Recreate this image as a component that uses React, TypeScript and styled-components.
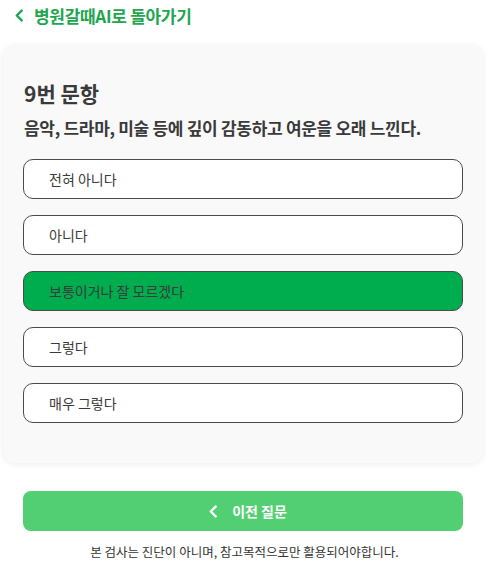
import styled, { createGlobalStyle } from "styled-components";
import { useState } from "react";

const GlobalStyle = createGlobalStyle`
  body {
    margin: 0;
    background: #ffffff;
    font-family: "Noto Sans CJK KR", "Noto Sans", sans-serif;
    color: #333333;
  }
`;

const options = ["전혀 아니다", "아니다", "보통이거나 잘 모르겠다", "그렇다", "매우 그렇다"];

function Chevron({ size = 12, color = "currentColor" }: { size?: number; color?: string }) {
  return (
    <svg width={size} height={size} viewBox="0 0 12 12" fill="none">
      <path d="M8 1.5 3.5 6 8 10.5" stroke={color} strokeWidth="2.2" strokeLinecap="round" strokeLinejoin="round" />
    </svg>
  );
}

export default function App() {
  const [selected, setSelected] = useState(2);

  return (
    <Page>
      <GlobalStyle />
      <BackLink>
        <Chevron size={13} />
        <span>병원갈때AI로 돌아가기</span>
      </BackLink>

      <Card>
        <Number>9번 문항</Number>
        <Question>음악, 드라마, 미술 등에 깊이 감동하고 여운을 오래 느낀다.</Question>
        <OptionList>
          {options.map((label, i) => (
            <Option key={label} $active={i === selected} onClick={() => setSelected(i)}>
              {label}
            </Option>
          ))}
        </OptionList>
      </Card>

      <PrevButton>
        <Chevron size={13} color="#ffffff" />
        <span>이전 질문</span>
      </PrevButton>
      <Notice>본 검사는 진단이 아니며, 참고목적으로만 활용되어야합니다.</Notice>
    </Page>
  );
}

const Page = styled.div`
  width: 499px;
  padding: 0 0 16px;
`;

const BackLink = styled.div`
  display: flex;
  align-items: center;
  gap: 8px;
  height: 30px;
  padding: 0 0 0 13px;
  color: #1ea64f;
  font-size: 17px;
  font-weight: 700;
  letter-spacing: -0.3px;
`;

const Card = styled.div`
  margin: 15px 16px 0 3px;
  padding: 30px 20px 40px;
  background: #f9f9f9;
  border-radius: 12px;
  box-shadow: 0 1px 6px rgba(0, 0, 0, 0.08);
`;

const Number = styled.div`
  margin-left: 1px;
  font-size: 21px;
  font-weight: 700;
  line-height: 36px;
  color: #3a3a3a;
`;

const Question = styled.div`
  margin: 2px 0 0 1px;
  font-size: 17px;
  font-weight: 700;
  line-height: 30px;
  color: #3a3a3a;
  letter-spacing: -0.3px;
`;

const OptionList = styled.div`
  display: flex;
  flex-direction: column;
  gap: 16px;
  margin-top: 16px;
`;

const Option = styled.div<{ $active: boolean }>`
  height: 40px;
  box-sizing: border-box;
  display: flex;
  align-items: center;
  padding-left: 25px;
  border: 1px solid #4a4a4a;
  border-radius: 10px;
  background: ${(p) => (p.$active ? "#00ad4e" : "#ffffff")};
  font-size: 14px;
  color: #3a3a3a;
  cursor: pointer;
`;

const PrevButton = styled.div`
  margin: 28px 36px 0 23px;
  height: 40px;
  display: flex;
  align-items: center;
  justify-content: center;
  gap: 12px;
  padding-left: 8px;
  background: #52cf73;
  border-radius: 8px;
  color: #ffffff;
  font-size: 14px;
  font-weight: 700;
`;

const Notice = styled.div`
  margin-top: 10px;
  text-align: center;
  padding-right: 10px;
  font-size: 12.5px;
  color: #333333;
  line-height: 22px;
`;
